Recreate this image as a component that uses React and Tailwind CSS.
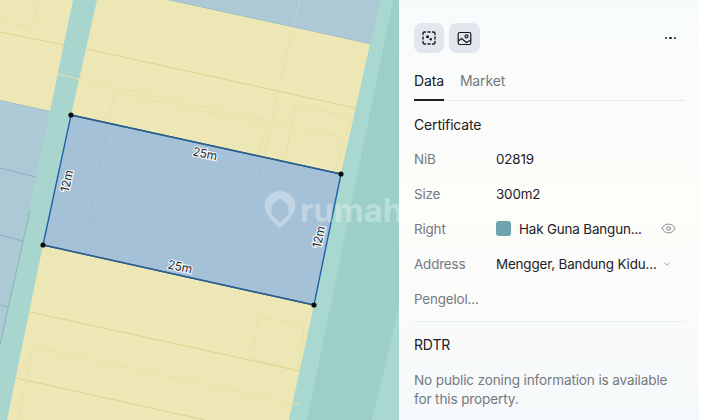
import React from "react";
import { Eye, ChevronDown } from "lucide-react";

function MapView() {
  const thin = "#e8e2aa";
  const mid = "#dcd18c";
  return (
    <svg width="399" height="420" viewBox="0 0 399 420" className="block">
      <rect width="399" height="420" fill="#a8d6cf" />
      {/* right road bands */}
      <polygon points="393,0 399,0 399,420 307,420" fill="#9ccfc9" />
      <polygon points="399,308 399,420 372,420" fill="#a9d8d0" />
      <polygon points="381,0 393,0 307,420 289,420" fill="#a9d8d0" />
      {/* left blue parcels */}
      <polygon points="0,100 50,111 0,345" fill="#aec9d6" />
      <line x1="0" y1="100" x2="50" y2="111" stroke="#8db0b8" strokeWidth="1" />
      <line x1="0" y1="168" x2="36" y2="177" stroke="#8aaebe" strokeWidth="1" />
      <line x1="0" y1="235" x2="22" y2="241" stroke="#8aaebe" strokeWidth="1" />
      <line x1="0" y1="305" x2="8" y2="307" stroke="#8aaebe" strokeWidth="1" />
      <line x1="30" y1="210" x2="0" y2="345" stroke="#85b3b5" strokeWidth="1" />
      {/* left yellow */}
      <polygon points="0,0 73,0 50,111 0,100" fill="#ece7b4" />
      <line x1="0" y1="32" x2="64" y2="45" stroke={mid} strokeWidth="1" />
      <polyline points="0,22 33,27 38,0" fill="none" stroke={thin} strokeWidth="1" />
      {/* top blue */}
      <polygon points="168,0 381,0 370,44 200,7" fill="#aec9d6" />
      <line x1="168" y1="0" x2="370" y2="44" stroke="#8fb1bb" strokeWidth="1" />
      <line x1="300" y1="0" x2="292" y2="29" stroke="#bed2d8" strokeWidth="1" />
      {/* middle yellow */}
      <polygon points="97,0 168,0 370,44 341,174 71,115" fill="#ece7b4" />
      <line x1="87" y1="49" x2="355" y2="108" stroke={mid} strokeWidth="1" />
      <line x1="292" y1="30" x2="264" y2="154" stroke={thin} strokeWidth="1" />
      <polyline points="115,92 268,125 255,160" fill="none" stroke={thin} strokeWidth="1" />
      <polyline points="50,72 82,80 345,138" fill="none" stroke={thin} strokeWidth="1" />
      <polyline points="295,106 352,116 335,170" fill="none" stroke={thin} strokeWidth="1" />
      <line x1="295" y1="106" x2="284" y2="166" stroke={thin} strokeWidth="1" />
      <line x1="115" y1="92" x2="108" y2="125" stroke={thin} strokeWidth="1" />
      {/* bottom yellow */}
      <polygon points="43,245 314,305 289,420 7,420" fill="#ece7b4" />
      <line x1="30" y1="312" x2="300" y2="371" stroke={mid} strokeWidth="1" />
      <line x1="16" y1="378" x2="205" y2="420" stroke={mid} strokeWidth="1" />
      <polyline points="33,347 300,405" fill="none" stroke={thin} strokeWidth="1" />
      <line x1="33" y1="347" x2="18" y2="420" stroke={thin} strokeWidth="1" />
      <polygon points="258,316 304,326 298,370 252,358" fill="none" stroke={thin} strokeWidth="1" />
      {/* selected parcel */}
      <polygon points="71,115 341,174 314,305 43,245" fill="#a5c1d8" />
      <polyline points="108,125 88,222 245,257 262,160" fill="none" stroke="#9fbdd2" strokeWidth="1" />
      <polyline points="278,167 330,178 305,246 245,257" fill="none" stroke="#9fbdd2" strokeWidth="0.8" />
      <polygon points="71,115 341,174 314,305 43,245" fill="none" stroke="#1f62a8" strokeWidth="1.4" />
      <line x1="71" y1="115" x2="341" y2="174" stroke="#2b5f8c" strokeWidth="1.4" />
      <line x1="43" y1="245" x2="314" y2="305" stroke="#2b5f8c" strokeWidth="1.4" />
      {[[71,115],[341,174],[314,305],[43,245]].map(([x,y]) => (
        <circle key={x} cx={x} cy={y} r="2.6" fill="#0b0f14" />
      ))}
      {/* measurement labels */}
      <g fontFamily="Inter, sans-serif" fontSize="12" fill="#20282e" stroke="#ffffff" strokeWidth="2" paintOrder="stroke" textAnchor="middle">
        <text x="205" y="158" transform="rotate(12.5 205 154)">25m</text>
        <text x="180" y="271" transform="rotate(12.5 180 267)">25m</text>
        <text x="67" y="185" transform="rotate(-77.5 67 181)">12m</text>
        <text x="319" y="241" transform="rotate(-77.5 319 237)">12m</text>
      </g>
      {/* watermark */}
      <g fill="#ffffff" fillOpacity="0.32">
        <path fillRule="evenodd" d="M280 191c-9 0-15.500 6.500-15.500 14.500 0 8 8 16.500 15.500 23 7.500-6.500 15.500-15 15.500-23C295.500 197.500 289 191 280 191zM280 198l8.500 7.500v9.500l-8.500 7-8.500-7v-9.500z" />
        <text x="300" y="222" fontFamily="Inter, sans-serif" fontSize="33" fontWeight="700">rumah</text>
      </g>
    </svg>
  );
}

function Row({ label, children }) {
  return (
    <div className="flex h-[35px] items-center">
      <div className="w-[82px] shrink-0 text-[#74797f]">{label}</div>
      {children}
    </div>
  );
}

export default function App() {
  return (
    <div className="flex h-[420px] w-[720px] overflow-hidden bg-white font-['Inter',sans-serif] text-[13.4px] leading-5 tracking-[-0.15px] text-[#1c2025]">
      <div className="w-[399px] shrink-0">
        <MapView />
      </div>
      <div className="flex w-[300px] shrink-0 flex-col bg-gradient-to-b from-[#f8fbfc] via-[#fdfdf9] to-[#f6f9fb] pl-[15px] pr-[14px] pt-[23px]">
        <div className="flex items-center gap-[5px]">
          <div className="flex h-[30px] w-[30px] items-center justify-center rounded-lg bg-[#e3e6ed]">
            <svg width="16" height="16" viewBox="0 0 16 16" fill="none" stroke="#16191d" strokeWidth="1.4" strokeLinecap="round">
              <path d="M2 4.500V3.500A1.500 1.500 0 0 1 3.500 2H4.500M7 2H9M11.500 2H12.500A1.500 1.500 0 0 1 14 3.500V4.500M14 7V9M14 11.500V12.500A1.500 1.500 0 0 1 12.500 14H11.500M9 14H7M4.500 14H3.500A1.500 1.500 0 0 1 2 12.500V11.500M2 9V7" />
              <circle cx="6.500" cy="6.800" r="1.500" fill="#16191d" stroke="none" />
              <circle cx="9.800" cy="9.300" r="1.200" fill="#16191d" stroke="none" />
            </svg>
          </div>
          <div className="flex h-[30px] w-[31px] items-center justify-center rounded-lg bg-[#e3e6ed]">
            <svg width="15" height="15" viewBox="0 0 15 15" fill="none" stroke="#16191d" strokeWidth="1.2">
              <rect x="1.200" y="1.500" width="12.600" height="12" rx="1.500" />
              <circle cx="9.500" cy="5.300" r="1.500" />
              <path d="M1.500 10l3-2.500 5 4 4.300-2.500" />
            </svg>
          </div>
          <div className="ml-auto mr-[9px] flex gap-[2px]">
            <span className="h-[2.500px] w-[2.500px] rounded-full bg-[#1c2025]" />
            <span className="h-[2.500px] w-[2.500px] rounded-full bg-[#1c2025]" />
            <span className="h-[2.500px] w-[2.500px] rounded-full bg-[#1c2025]" />
          </div>
        </div>
        <div className="mt-[18px] flex gap-[16px] border-b border-[#e8eaec] text-[14px]">
          <div className="-mb-px h-[30px] border-b-2 border-[#1c2025]">Data</div>
          <div className="text-[#74797f]">Market</div>
        </div>
        <div className="mt-[14px] text-[14px]">Certificate</div>
        <div className="mt-[6px]">
          <Row label="NiB">02819</Row>
          <Row label="Size">300m2</Row>
          <Row label="Right">
            <span className="mr-[8px] h-[15px] w-[15px] rounded-[3px] bg-[#6ea4b0]" />
            <span className="w-[125px] whitespace-nowrap">Hak Guna Bangun...</span>
            <Eye size={15} strokeWidth={1.2} className="ml-[17px] text-[#5c6369]" />
          </Row>
          <Row label="Address">
            <span className="w-[160px] whitespace-nowrap">Mengger, Bandung Kidu...</span>
            <ChevronDown size={10} strokeWidth={1.4} className="ml-[6px] text-[#5c6369]" />
          </Row>
          <Row label="Pengelol...">{null}</Row>
        </div>
        <div className="mt-[5px] border-t border-[#e8eef2]" />
        <div className="mt-[13px] text-[14px]">RDTR</div>
        <div className="mt-[16px] w-[268px] text-[13.6px] leading-[19px] text-[#74797f]">
          No public zoning information is available for this property.
        </div>
      </div>
    </div>
  );
}
